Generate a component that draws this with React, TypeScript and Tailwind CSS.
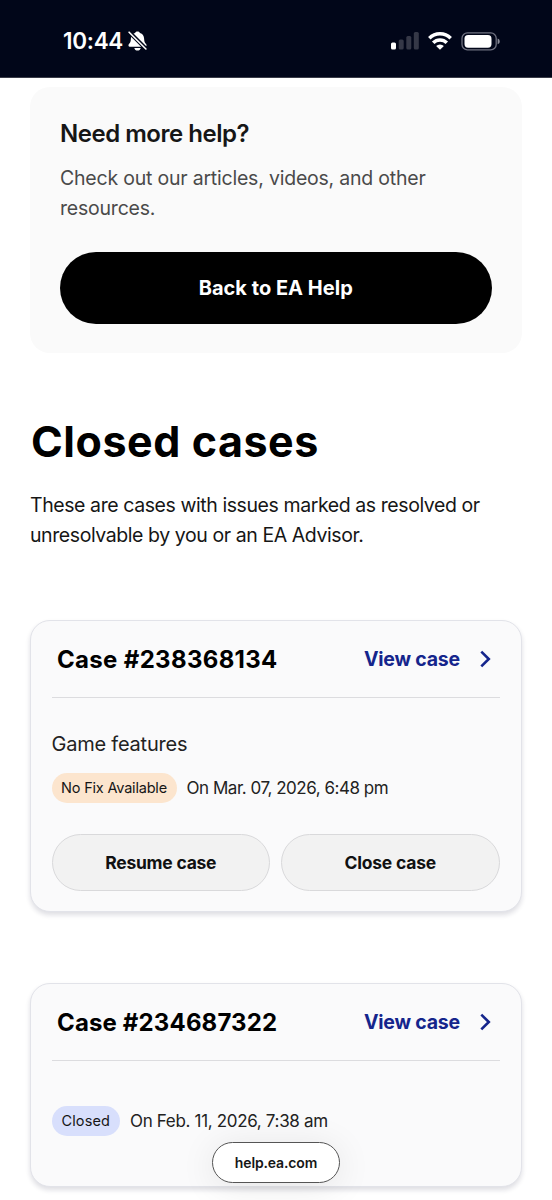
import type { ReactNode } from "react";

function StatusBar() {
  return (
    <header className="flex h-[78px] shrink-0 items-center justify-between border-b border-[#3a3c48] bg-[#010619] pl-[63px] pr-[51px] pt-[5px] text-white">
      <div className="flex items-center gap-[5px]">
        <span className="text-[22.5px] font-semibold leading-none tracking-[-0.3px]">10:44</span>
        <svg width="19" height="20" viewBox="0 0 19 20">
          <path
            d="M9.500 .4c1.300 0 2.200.7 2.500 1.700 2.700.8 4 2.900 4.100 5.500.1 3.100.7 4.200 1.900 5.400 1 1 .6 2.700-.8 2.700H1.800c-1.400 0-1.800-1.700-.8-2.700 1.200-1.200 1.800-2.300 1.900-5.400.1-2.600 1.400-4.700 4.100-5.500C7.300 1.100 8.200.4 9.500.4ZM6.300 17h6.400c-.3 1.600-1.600 2.600-3.200 2.600s-2.900-1-3.200-2.600Z"
            fill="currentColor"
          />
          <path d="M.2 0 19 18.800" stroke="#010619" strokeWidth="4" />
          <path d="M1.100 1.200 17.900 18" stroke="currentColor" strokeWidth="1.600" strokeLinecap="round" />
        </svg>
      </div>
      <div className="flex items-center">
        <svg width="28" height="18" viewBox="0 0 28 18">
          <rect x="0" y="10.500" width="5" height="7" rx="1.500" fill="white" />
          <rect x="7.700" y="7.500" width="5" height="10" rx="1.500" fill="#353847" />
          <rect x="15.300" y="4" width="5" height="13.500" rx="1.500" fill="#353847" />
          <rect x="22.800" y="0" width="5" height="17.500" rx="1.500" fill="#353847" />
        </svg>
        <svg className="ml-[9px]" width="24" height="18" viewBox="0 0 24 18">
          <g fill="none" stroke="white" strokeWidth="3.500">
            <path d="M1.300 6.200a15.200 15.200 0 0 1 21.400 0" />
            <path d="M5.200 10.700a9.600 9.600 0 0 1 13.600 0" />
          </g>
          <path d="M12 17.800 8.100 14a5.500 5.500 0 0 1 7.800 0Z" fill="white" />
        </svg>
        <svg className="ml-[9px]" width="40" height="19" viewBox="0 0 40 19">
          <rect x="1" y=".9" width="34.200" height="17" rx="5.400" fill="none" stroke="#6f7180" strokeWidth="1.300" />
          <rect x="3.500" y="3.100" width="27" height="12.600" rx="3.600" fill="white" />
          <path d="M36.600 6.600c1.400.5 2.100 1.500 2.100 2.800s-.7 2.300-2.100 2.800Z" fill="#8a8c98" />
        </svg>
      </div>
    </header>
  );
}

function CaseHeader({ id, className }: { id: string; className: string }) {
  return (
    <div className="flex h-[77px] items-center justify-between border-b border-[#dcdcdf] pl-[5.5px] pr-[7.5px]">
      <h2 className={`pt-px text-[24px] font-bold leading-[30px] text-black ${className}`}>Case #{id}</h2>
      <a className="flex items-center text-[19.5px] font-bold leading-[30px] tracking-[-0.2px] text-[#15258c]">
        View case
        <svg className="ml-[19px]" width="13" height="18" viewBox="0 0 13 18">
          <path d="M2.300 1.600 9.800 9l-7.500 7.400" fill="none" stroke="currentColor" strokeWidth="2.600" />
        </svg>
      </a>
    </div>
  );
}

function CaseCard({ className, children }: { className: string; children: ReactNode }) {
  return (
    <section
      className={`rounded-[20px] border border-[#e2e3e9] bg-[#fafafb] pl-[20.5px] pr-[21px] shadow-[0_3px_5px_rgba(20,20,60,0.14)] ${className}`}
    >
      {children}
    </section>
  );
}

function CaseButton({ className, children }: { className: string; children: ReactNode }) {
  return (
    <button
      className={`h-[57px] flex-1 rounded-full border border-[#d9d9db] bg-[#f2f2f2] pt-px text-[17.5px] font-bold text-[#111111] ${className}`}
    >
      {children}
    </button>
  );
}

export default function App() {
  return (
    <div className="relative flex h-[1200px] w-[552px] flex-col overflow-hidden bg-white font-['Inter',sans-serif]">
      <StatusBar />
      <main className="flex flex-col pl-[30px] pr-[30.5px] pt-[9px]">
        <section className="h-[266px] rounded-[20px] bg-[#fafafa] px-[30px] pt-[32px]">
          <h3 className="text-[24px] font-semibold leading-[30px] tracking-[-0.48px] text-[#161616]">Need more help?</h3>
          <p className="mt-[14px] text-[19.5px] leading-[30px] tracking-[-0.21px] text-[#4a4a4a]">
            Check out our articles, videos, and other
            <br />
            resources.
          </p>
          <button className="mt-[29px] h-[72px] w-full rounded-full bg-black text-[20px] font-bold tracking-[0.02px] text-white">
            Back to EA Help
          </button>
        </section>

        <h1 className="mt-[60px] pl-px text-[43px] font-bold leading-[56px] tracking-[0.55px] text-black">Closed cases</h1>
        <p className="mt-[21px] text-[19.5px] leading-[30px] tracking-[-0.42px] text-[#161616]">
          These are cases with issues marked as resolved or
          <br />
          unresolvable by you or an EA Advisor.
        </p>

        <CaseCard className="mt-[70px] h-[292px]">
          <CaseHeader id="238368134" className="tracking-[0.33px]" />
          <p className="mt-[31px] text-[20px] leading-[30px] tracking-[-0.22px] text-[#222222]">Game features</p>
          <div className="mt-[14px] flex h-[30px] items-center gap-2.5">
            <span className="flex h-[30px] w-[125px] items-center justify-center rounded-full bg-[#fce5ce] text-[14.5px] tracking-[-0.2px] text-[#161616]">
              No Fix Available
            </span>
            <span className="pt-[2px] text-[17px] tracking-[-0.47px] text-[#222222]">On Mar. 07, 2026, 6:48 pm</span>
          </div>
          <div className="mt-[31px] flex gap-[11px]">
            <CaseButton className="tracking-[-0.25px]">Resume case</CaseButton>
            <CaseButton className="tracking-[-0.2px]">Close case</CaseButton>
          </div>
        </CaseCard>

        <CaseCard className="mt-[71px] h-[204px]">
          <CaseHeader id="234687322" className="tracking-[0.15px]" />
          <div className="mt-[45px] flex h-[30px] items-center gap-2.5">
            <span className="flex h-[30px] w-[68.5px] items-center justify-center rounded-full bg-[#d8dffc] text-[14.5px] tracking-[0.1px] text-[#161616]">
              Closed
            </span>
            <span className="pt-[2px] text-[17px] tracking-[-0.33px] text-[#222222]">On Feb. 11, 2026, 7:38 am</span>
          </div>
        </CaseCard>
      </main>

      <div className="absolute left-[212px] top-[1142px] flex h-[41px] w-[128px] items-center justify-center rounded-full border border-[#555555] bg-white text-[14px] font-semibold tracking-[-0.15px] text-[#161616] shadow-[0_4px_36px_rgba(0,0,0,0.09)]">
        help.ea.com
      </div>
    </div>
  );
}
